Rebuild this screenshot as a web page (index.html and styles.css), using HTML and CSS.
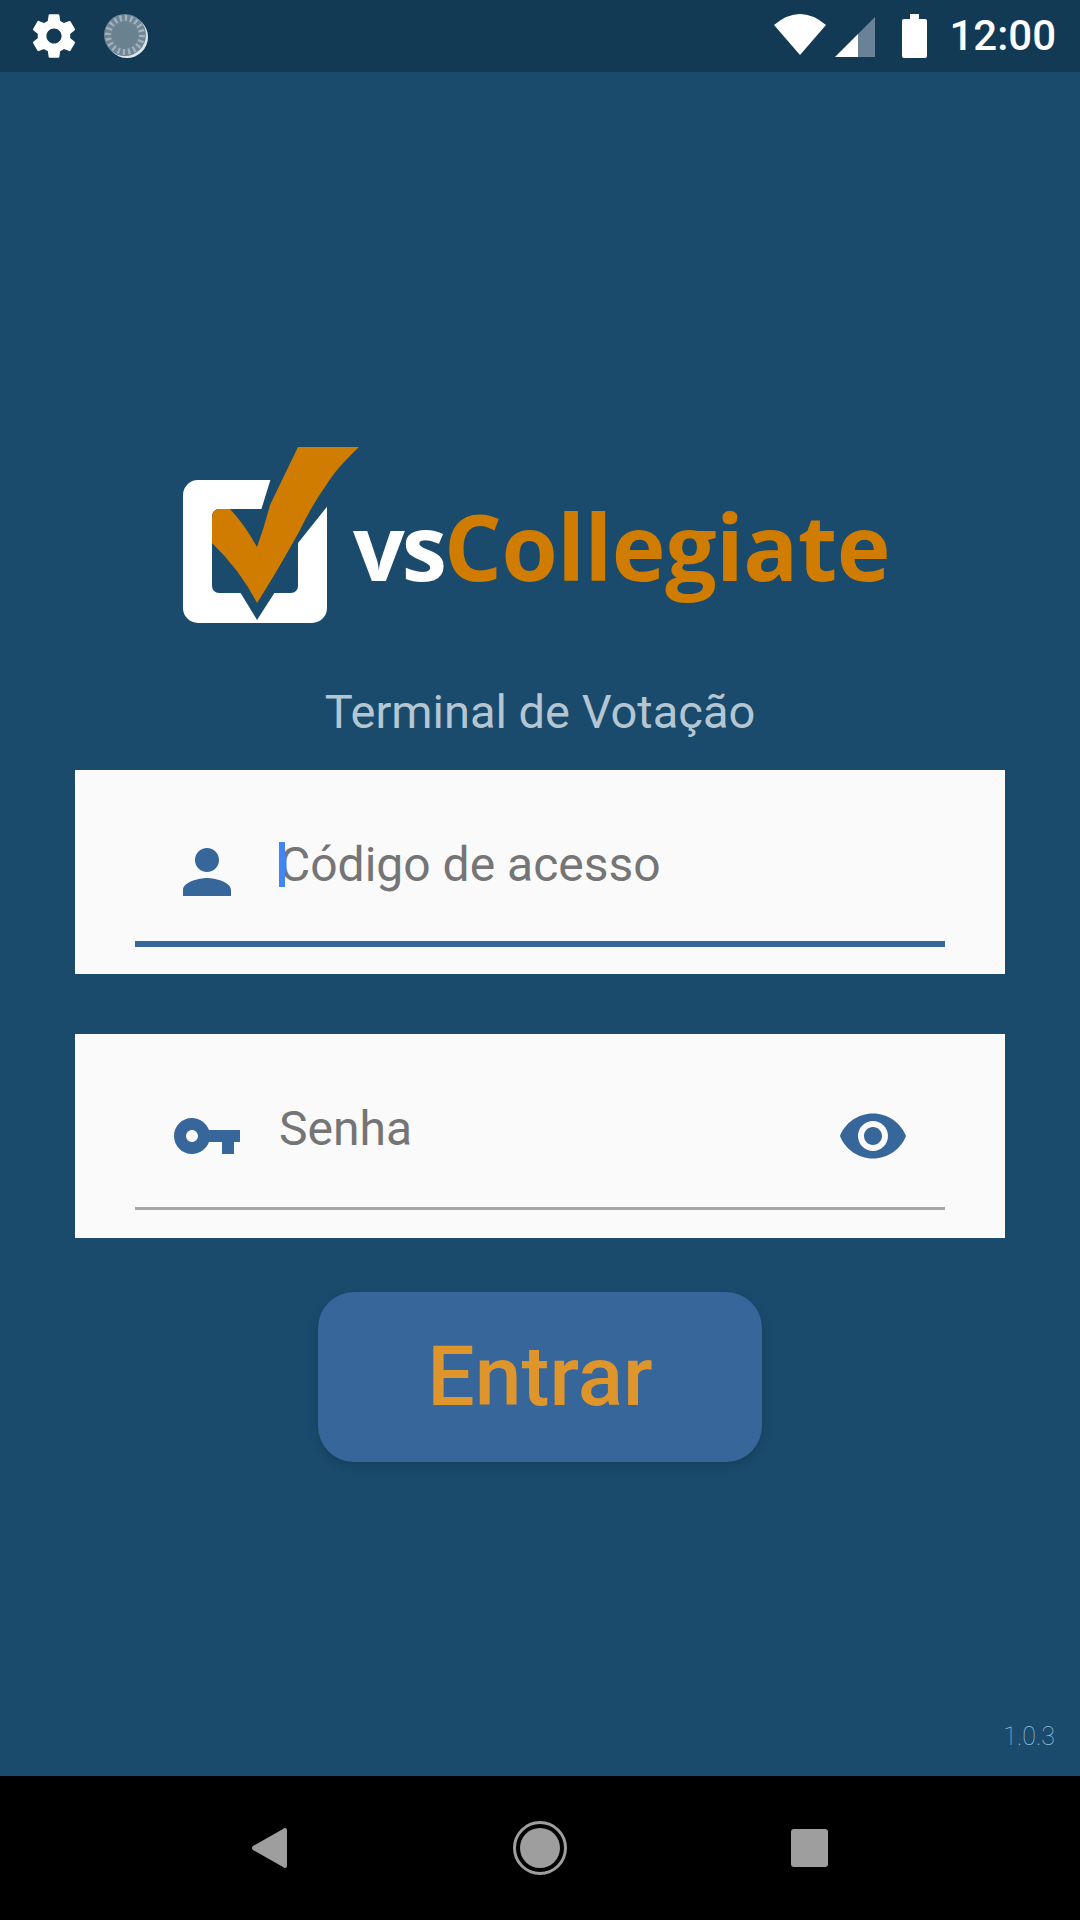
FILE: index.html

```html
<!DOCTYPE html>
<html lang="pt-BR">
<head>
  <meta charset="UTF-8" />
  <meta name="viewport" content="width=device-width, initial-scale=1.0"/>
  <title>vsCollegiate – Terminal de Votação</title>
  <link rel="stylesheet" href="styles.css">
</head>
<body>

  <div class="phone">

    <div class="status-bar">
      <svg class="icon-gear" viewBox="0 0 24 24"><path fill="#fff" d="M19.43 12.98c.04-.32.07-.64.07-.98s-.03-.66-.07-.98l2.11-1.65c.19-.15.24-.42.12-.64l-2-3.46c-.12-.22-.39-.3-.61-.22l-2.49 1c-.52-.4-1.08-.73-1.69-.98l-.38-2.65C14.46 2.18 14.25 2 14 2h-4c-.25 0-.46.18-.49.42l-.38 2.65c-.61.25-1.17.59-1.69.98l-2.49-1c-.23-.09-.49 0-.61.22l-2 3.46c-.13.22-.07.49.12.64l2.11 1.65c-.04.32-.07.65-.07.98s.03.66.07.98l-2.11 1.65c-.19.15-.24.42-.12.64l2 3.46c.12.22.39.3.61.22l2.49-1c.52.4 1.08.73 1.69.98l.38 2.65c.03.24.24.42.49.42h4c.25 0 .46-.18.49-.42l.38-2.65c.61-.25 1.17-.59 1.69-.98l2.49 1c.23.09.49 0 .61-.22l2-3.46c.12-.22.07-.49-.12-.64l-2.11-1.65zM12 15.5c-1.93 0-3.5-1.57-3.5-3.5s1.57-3.5 3.5-3.5 3.5 1.57 3.5 3.5-1.57 3.5-3.5 3.5z"/></svg>
      <svg class="icon-spinner" viewBox="0 0 44 44">
        <circle cx="23" cy="23" r="21" fill="#dfe6ea"/>
        <circle cx="21" cy="21" r="21" fill="#6f8696"/>
        <circle cx="21" cy="21" r="17" fill="none" stroke="#a3b2bc" stroke-width="6" stroke-dasharray="2.2 3.1"/>
        <circle cx="21" cy="21" r="13" fill="#6a818f"/>
      </svg>
      <div class="status-right">
        <svg class="icon-wifi" viewBox="0 0 52 41"><path fill="#fff" d="M26 41 0 11Q26-11 52 11Z"/></svg>
        <svg class="icon-signal" viewBox="0 0 40 40">
          <path fill="#6a8296" d="M40 0V40H23V17Z"/>
          <path fill="#fff" d="M0 40 23 17V40Z"/>
        </svg>
        <svg class="icon-battery" viewBox="0 0 25 44"><path fill="#fff" d="M8 0H17V5H23Q25 5 25 7V42Q25 44 23 44H2Q0 44 0 42V7Q0 5 2 5H8Z"/></svg>
        <span class="clock">12:00</span>
      </div>
    </div>

    <div class="main">

      <div class="logo">
        <svg class="logo-mark" viewBox="183 445 178 180">
          <rect x="183" y="480" width="144" height="143" rx="15" fill="#fff"/>
          <rect x="212" y="509" width="86" height="84" rx="7" fill="#1a4b6c"/>
          <path fill="#1a4b6c" d="M271 478H330V503L298 543V520H258ZM240 592 257 620 275 592Z"/>
          <path fill="#cf7c00" d="M298 447H359Q335 470 327 484 312 505 300 530 275 575 257 603 240 570 212 543V518Q212 509 220 509H230Q245 525 257 547 265 525 270 505Z"/>
        </svg>
        <div class="logo-text">vs<span class="logo-accent">Collegiate</span></div>
      </div>

      <div class="subtitle">Terminal de Votação</div>

      <div class="field">
        <div class="field-row focused">
          <svg class="field-icon" viewBox="0 0 24 24"><path d="M12 12c2.21 0 4-1.79 4-4s-1.79-4-4-4-4 1.79-4 4 1.79 4 4 4zm0 2c-2.67 0-8 1.34-8 4v2h16v-2c0-2.66-5.33-4-8-4z"/></svg>
          <div class="field-text"><span class="caret"></span>Código de acesso</div>
        </div>
      </div>

      <div class="field second">
        <div class="field-row">
          <svg class="field-icon" viewBox="0 0 24 24"><path d="M12.65 10C11.83 7.67 9.61 6 7 6c-3.31 0-6 2.69-6 6s2.69 6 6 6c2.61 0 4.83-1.67 5.65-4H17v4h4v-4h2v-4H12.65zM7 14c-1.1 0-2-.9-2-2s.9-2 2-2 2 .9 2 2-.9 2-2 2z"/></svg>
          <div class="field-text">Senha</div>
          <svg class="field-icon eye" viewBox="0 0 24 24"><path d="M12 4.5C7 4.5 2.73 7.61 1 12c1.73 4.39 6 7.5 11 7.5s9.27-3.11 11-7.5c-1.73-4.39-6-7.5-11-7.5zM12 17c-2.76 0-5-2.24-5-5s2.24-5 5-5 5 2.24 5 5-2.24 5-5 5zm0-8c-1.66 0-3 1.34-3 3s1.34 3 3 3 3-1.34 3-3-1.34-3-3-3z"/></svg>
        </div>
      </div>

      <button class="enter-btn">Entrar</button>

      <div class="version">1.0.3</div>
    </div>

    <div class="nav-bar">
      <svg class="nav-back" viewBox="0 0 35 40"><path fill="#9e9e9e" d="M33 0Q35 0 35 2V38Q35 40 33 40 32 40 31 39L1 22Q-1 20 1 18L31 1Q32 0 33 0Z"/></svg>
      <svg class="nav-home" viewBox="0 0 54 54">
        <circle cx="27" cy="27" r="25.5" fill="none" stroke="#9e9e9e" stroke-width="3"/>
        <circle cx="27" cy="27" r="20" fill="#9e9e9e"/>
      </svg>
      <div class="nav-square"></div>
    </div>

  </div>

</body>
</html>
```

FILE: styles.css

```css
body {
  margin: 0;
  font-family: Roboto, sans-serif;
}
.phone {
  width: 1080px;
  height: 1920px;
  display: flex;
  flex-direction: column;
  background: #1a4b6c;
  overflow: hidden;
}

/* status bar */
.status-bar {
  height: 72px;
  flex: none;
  display: flex;
  align-items: center;
  background: #133a54;
  padding: 0 24px 0 28px;
  box-sizing: border-box;
}
.icon-gear {
  width: 52px;
  height: 52px;
}
.icon-spinner {
  width: 44px;
  height: 44px;
  margin-left: 24px;
}
.status-right {
  margin-left: auto;
  display: flex;
  align-items: center;
}
.icon-wifi {
  width: 52px;
  height: 41px;
  margin-top: -3px;
}
.icon-signal {
  width: 40px;
  height: 40px;
  margin-left: 9px;
  margin-top: 2px;
}
.icon-battery {
  width: 25px;
  height: 44px;
  margin-left: 27px;
}
.clock {
  margin-left: 22px;
  font-size: 42px;
  font-weight: 500;
  line-height: 48px;
  color: #fff;
}

/* main area */
.main {
  flex: 1;
  display: flex;
  flex-direction: column;
  padding: 373px 0 24px;
}
.logo {
  display: flex;
  align-items: flex-start;
  padding-left: 183px;
}
.logo-mark {
  width: 178px;
  height: 180px;
  flex: none;
}
.logo-text {
  margin-left: -8px;
  margin-top: 41px;
  font-family: "Open Sans", sans-serif;
  font-weight: 700;
  font-size: 91px;
  line-height: 120px;
  letter-spacing: -3px;
  color: #fff;
}
.logo-accent {
  letter-spacing: -0.5px;
  color: #cf7c00;
}
.subtitle {
  margin-top: 61px;
  text-align: center;
  font-size: 47px;
  line-height: 52px;
  color: #b5c6d3;
}

/* input cards */
.field {
  margin: 32px 75px 0;
  height: 204px;
  box-sizing: border-box;
  padding: 33px 60px 0;
  background: #fafafa;
}
.field.second {
  margin-top: 60px;
  padding-top: 31px;
}
.field-row {
  display: flex;
  align-items: center;
  height: 144px;
  box-sizing: border-box;
  padding: 0 36px;
  border-bottom: 3px solid #a6a6a6;
}
.field.second .field-row {
  height: 145px;
}
.field-row.focused {
  border-bottom: 6px solid #36669a;
}
.field-icon {
  width: 72px;
  height: 72px;
  flex: none;
  fill: #36669a;
}
.field-icon.eye {
  margin-left: auto;
}
.field-text {
  position: relative;
  margin-left: 36px;
  padding-bottom: 15px;
  font-size: 48px;
  line-height: 56px;
  color: #757575;
}
.caret {
  position: absolute;
  left: 0;
  top: 5px;
  width: 6px;
  height: 45px;
  background: #4285f4;
}

/* button */
.enter-btn {
  align-self: center;
  width: 444px;
  height: 170px;
  margin-top: 54px;
  padding: 0 0 1px;
  border: none;
  border-radius: 36px;
  background: #36669a;
  color: #dd952c;
  font-family: Roboto, sans-serif;
  font-weight: 500;
  font-size: 84px;
  box-shadow: 0 4px 10px rgba(0, 0, 0, 0.15);
}

.version {
  margin-top: auto;
  align-self: flex-end;
  padding-right: 25px;
  font-size: 25px;
  font-weight: 100;
  line-height: 30px;
  color: #9cc0d8;
}

/* bottom navigation */
.nav-bar {
  height: 144px;
  flex: none;
  display: grid;
  grid-template-columns: 1fr auto 1fr;
  align-items: center;
  padding: 0 252px;
  background: #000;
}
.nav-back {
  width: 35px;
  height: 40px;
}
.nav-home {
  width: 54px;
  height: 54px;
}
.nav-square {
  justify-self: end;
  width: 37px;
  height: 38px;
  border-radius: 3px;
  background: #9e9e9e;
}
```
